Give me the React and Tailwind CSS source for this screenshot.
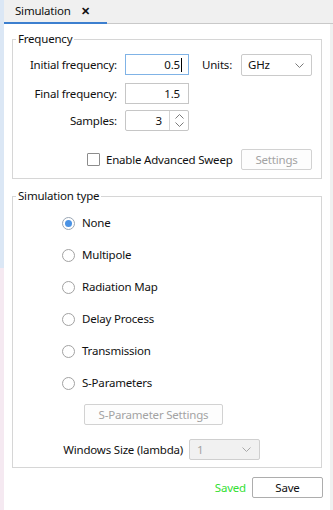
import React from "react";

function Chevron({ color = "#7a7a7a" }) {
  return (
    <svg width="9" height="5" viewBox="0 0 9 5" className="block">
      <polyline points="0.5,0.5 4.5,4.5 8.5,0.5" fill="none" stroke={color} strokeWidth="1" />
    </svg>
  );
}

function Radio({ label, checked }) {
  return (
    <div className="h-[32px] flex items-center pl-[49px]">
      <div
        className={
          checked
            ? "w-[13px] h-[13px] rounded-full border border-[#9aa6b4] bg-white flex items-center justify-center"
            : "w-[13px] h-[13px] rounded-full border border-[#a2a2a2] bg-white"
        }
      >
        {checked && <div className="w-[7px] h-[7px] rounded-full bg-[#4a92e4]" />}
      </div>
      <span className="ml-[7px] text-[#111]">{label}</span>
    </div>
  );
}

export default function App() {
  return (
    <div className="w-[333px] h-[510px] flex bg-[#f0f0f0] overflow-hidden font-['Noto_Sans',sans-serif] text-[11.5px] tracking-[-0.2px] leading-[16px] text-[#111] whitespace-nowrap">
      <div className="w-[4px] flex flex-col">
        <div className="h-[268px] bg-[#dbe7f5]" />
        <div className="flex-1 bg-[#f5e9f1]" />
      </div>
      <div className="flex-1 flex flex-col">
        <div className="h-[24px] flex shrink-0">
          <div className="w-[103px] flex items-center pl-[11px] border-b-2 border-[#3c7fcf]">
            <span>Simulation</span>
            <span className="ml-[10px] text-[11px] font-bold">✕</span>
          </div>
          <div className="flex-1 border-b border-[#c9c9c9]" />
        </div>
        <div className="flex-1 flex">
          <div className="w-[326px] bg-white px-[8px] flex flex-col">
            {/* Frequency */}
            <fieldset className="mt-[7px] w-[310px] border border-[#d6d6d6] pt-[7px] pb-[8px]">
              <legend className="ml-[3px] px-[2px] leading-[16px]">Frequency</legend>
              <div className="h-[22px] flex items-start">
                <div className="w-[104px] h-[21px] flex items-center justify-end">Initial frequency:</div>
                <div className="ml-[8px] w-[64px] h-[21px] border border-[#80b3e6] flex items-center justify-end pr-[6px]">
                  <span>0.5</span>
                  <span className="ml-[1px] w-[1px] h-[14px] bg-black" />
                </div>
                <div className="ml-[13px] h-[21px] flex items-center">Units:</div>
                <div className="ml-[9px] w-[71px] h-[22px] border border-[#cacaca] rounded-[2px] flex items-center pl-[6px] pr-[7px]">
                  <span className="flex-1">GHz</span>
                  <Chevron />
                </div>
              </div>
              <div className="mt-[7px] h-[21px] flex items-center">
                <div className="w-[104px] text-right">Final frequency:</div>
                <div className="ml-[8px] w-[64px] h-[21px] border border-[#c6c6c6] flex items-center justify-end pr-[8px]">
                  1.5
                </div>
              </div>
              <div className="mt-[6px] h-[21px] flex items-center">
                <div className="w-[104px] text-right">Samples:</div>
                <div className="ml-[8px] w-[64px] h-[21px] border border-[#c6c6c6] rounded-[2px] flex">
                  <div className="flex-1 flex items-center justify-end pr-[7px]">3</div>
                  <div className="w-[19px] border-l border-[#d4d4d4] flex flex-col items-center justify-center gap-[3px]">
                    <svg width="9" height="5" viewBox="0 0 9 5" className="block">
                      <polyline points="0.5,4.5 4.5,0.5 8.5,4.5" fill="none" stroke="#7a7a7a" strokeWidth="1" />
                    </svg>
                    <Chevron />
                  </div>
                </div>
              </div>
              <div className="mt-[18px] h-[21px] flex items-center">
                <div className="ml-[74px] w-[13px] h-[13px] border border-[#8c8c8c] rounded-[1px] bg-white" />
                <span className="ml-[6px]">Enable Advanced Sweep</span>
                <div className="ml-auto mr-[9px] w-[71px] h-[21px] border border-[#d2d2d2] rounded-[2px] bg-[#fdfdfd] flex items-center justify-center text-[#a3a3a3]">
                  Settings
                </div>
              </div>
            </fieldset>

            {/* Simulation type */}
            <fieldset className="mt-[9px] w-[310px] border border-[#d6d6d6] pt-[3px] pb-[7px]">
              <legend className="ml-[3px] px-[2px] leading-[16px]">Simulation type</legend>
              <Radio label="None" checked />
              <Radio label="Multipole" />
              <Radio label="Radiation Map" />
              <Radio label="Delay Process" />
              <Radio label="Transmission" />
              <Radio label="S-Parameters" />
              <div className="mt-[5px] ml-[71px] w-[139px] h-[21px] border border-[#d2d2d2] rounded-[2px] bg-[#fdfdfd] flex items-center justify-center text-[#a3a3a3]">
                S-Parameter Settings
              </div>
              <div className="mt-[14px] h-[21px] flex items-center">
                <div className="w-[170px] text-right">Windows Size (lambda)</div>
                <div className="ml-[6px] w-[71px] h-[21px] border border-[#cfcfcf] rounded-[2px] bg-[#f1f1f1] flex items-center pl-[7px] pr-[8px] text-[#a3a3a3]">
                  <span className="flex-1">1</span>
                  <Chevron color="#a8a8a8" />
                </div>
              </div>
            </fieldset>

            <div className="mt-[9px] w-[311px] flex items-center justify-end">
              <span className="text-[#33e033]">Saved</span>
              <div className="ml-[6px] w-[71px] h-[21px] border border-[#adadad] rounded-[2px] bg-white flex items-center justify-center">
                Save
              </div>
            </div>
          </div>
          <div className="flex-1" />
        </div>
      </div>
    </div>
  );
}
